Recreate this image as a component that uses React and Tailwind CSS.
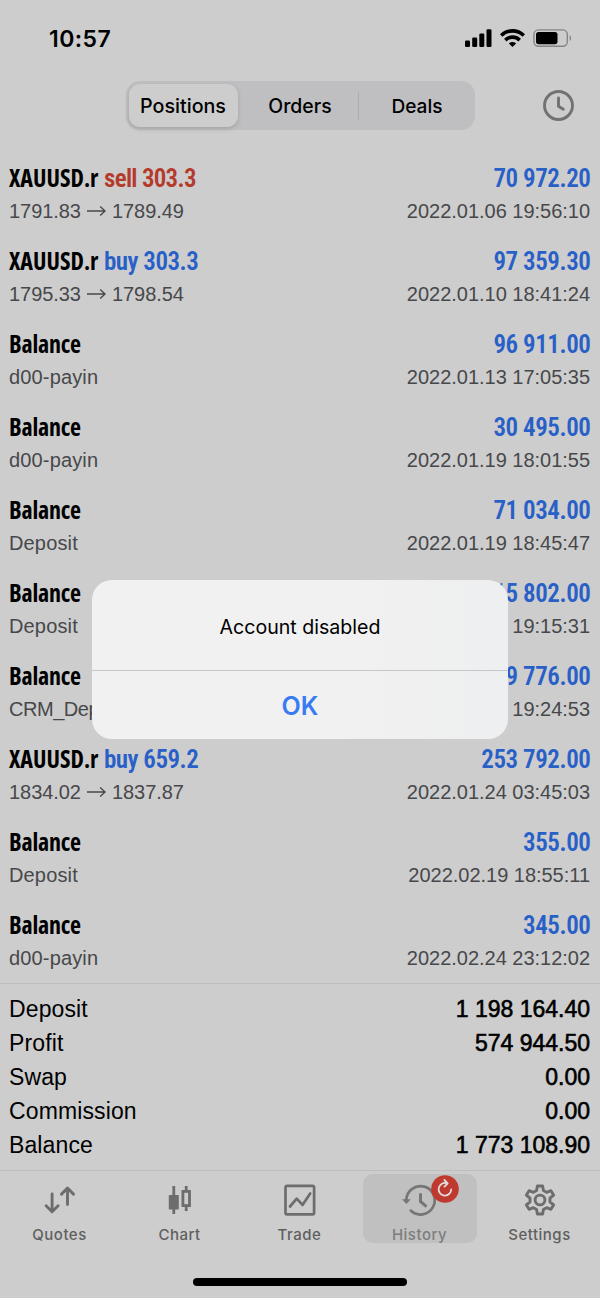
const deals = [
  { side: "sell", name: "XAUUSD.r", volume: "303.3", amount: "70 972.20", from: "1791.83", to: "1789.49", time: "2022.01.06 19:56:10" },
  { side: "buy", name: "XAUUSD.r", volume: "303.3", amount: "97 359.30", from: "1795.33", to: "1798.54", time: "2022.01.10 18:41:24" },
  { name: "Balance", note: "d00-payin", amount: "96 911.00", time: "2022.01.13 17:05:35" },
  { name: "Balance", note: "d00-payin", amount: "30 495.00", time: "2022.01.19 18:01:55" },
  { name: "Balance", note: "Deposit", amount: "71 034.00", time: "2022.01.19 18:45:47" },
  { name: "Balance", note: "Deposit", amount: "15 802.00", time: "2022.01.19 19:15:31" },
  { name: "Balance", note: "CRM_Deposit", amount: "9 776.00", time: "2022.01.19 19:24:53" },
  { side: "buy", name: "XAUUSD.r", volume: "659.2", amount: "253 792.00", from: "1834.02", to: "1837.87", time: "2022.01.24 03:45:03" },
  { name: "Balance", note: "Deposit", amount: "355.00", time: "2022.02.19 18:55:11" },
  { name: "Balance", note: "d00-payin", amount: "345.00", time: "2022.02.24 23:12:02" },
];

const totals = [
  ["Deposit", "1 198 164.40"],
  ["Profit", "574 944.50"],
  ["Swap", "0.00"],
  ["Commission", "0.00"],
  ["Balance", "1 773 108.90"],
];

function StatusBar() {
  return (
    <div className="flex h-[76px] items-center justify-between pl-[49px] pr-7 font-['Inter',sans-serif]">
      <span className="pt-[2px] text-[23px] font-semibold tracking-[0.45px]">10:57</span>
      <div className="flex items-center">
        <svg width="27" height="18" viewBox="0 0 27 18" className="mr-2">
          <rect x="0" y="11.5" width="5" height="6.5" rx="1.3" />
          <rect x="7.2" y="8.5" width="5" height="9.5" rx="1.3" />
          <rect x="14.3" y="4.5" width="5" height="13.5" rx="1.3" />
          <rect x="21.5" y="0.3" width="5" height="17.7" rx="1.3" />
        </svg>
        <svg width="25" height="18" viewBox="0 0 25 18" className="mr-2" fill="none" stroke="#000" strokeWidth="3.6">
          <path d="M1.2 6.5a16 16 0 0 1 22.6 0" />
          <path d="M5.3 11.1a10.3 10.3 0 0 1 14.4 0" />
          <path d="M12.5 18 8.9 14.4a5.2 5.2 0 0 1 7.2 0Z" fill="#000" stroke="none" />
        </svg>
        <svg width="39" height="18" viewBox="0 0 39 18">
          <rect x="0.9" y="0.9" width="33.4" height="16.4" rx="4.5" fill="none" stroke="#858585" strokeWidth="1.4" />
          <rect x="3" y="3" width="21.5" height="12.2" rx="2.6" />
          <path d="M36.6 6.3c2 .8 2 4.8 0 5.6Z" fill="#858585" />
        </svg>
      </div>
    </div>
  );
}

function Header() {
  return (
    <div className="flex h-[77px] items-start pl-[126px] pt-[5px]">
      <div className="flex h-[49px] w-[349px] items-center rounded-[14px] bg-[#bfbfc2] px-[3px] text-center font-['Inter',sans-serif] font-medium">
        <div className="h-[43px] w-[109px] rounded-[11px] bg-[#cdcdcd] pr-px text-[19.7px] leading-[45px] shadow-[0_2px_5px_rgba(0,0,0,0.14)]">Positions</div>
        <div className="w-[121px] border-r border-[#acacaf] pl-[4px] text-[19.4px] leading-[28px]">Orders</div>
        <div className="flex-1 pl-[3px] text-[19.1px] leading-[28px]">Deals</div>
      </div>
      <svg width="32" height="32" viewBox="0 0 32 32" className="ml-[67px] mt-2" fill="none" stroke="#727272" strokeWidth="2.9" strokeLinecap="round" strokeLinejoin="round">
        <circle cx="16.5" cy="16.5" r="14" />
        <path d="M16.5 9v8.2l4.8 3" />
      </svg>
    </div>
  );
}

function Arrow() {
  return (
    <svg width="19" height="12" viewBox="0 0 19 12" className="mx-[6px]" fill="none" stroke="#47484b" strokeWidth="1.4">
      <path d="M0 6h18M13.2 1.4 18.1 6l-4.9 4.6" />
    </svg>
  );
}

function DealRow({ deal }) {
  return (
    <div className="h-[83px] pl-[9px] pr-[10px] pt-[5px]">
      <div className="flex h-10 items-center justify-between text-[25px] [font-stretch:75%]">
        <div className="flex items-center">
          <span className={deal.side ? "w-[95px] font-['Open_Sans',sans-serif] text-2xl font-bold" : "font-['Open_Sans',sans-serif] text-2xl font-bold tracking-[-0.2px]"}>{deal.name}</span>
          {deal.side && (
            <span className={deal.side === "sell" ? "pt-[2px] font-['Roboto',sans-serif] font-semibold tracking-[-0.7px] text-[#b43a2c]" : "pt-[2px] font-['Roboto',sans-serif] font-semibold tracking-[-0.5px] text-[#2860c8]"}>
              {deal.side} {deal.volume}
            </span>
          )}
        </div>
        <span className="mr-[-0.5px] pt-[2px] font-['Roboto',sans-serif] font-semibold tracking-[-0.42px] text-[#2860c8]">{deal.amount}</span>
      </div>
      <div className="flex h-[26px] items-center justify-between text-xl text-[#47484b]">
        {deal.side ? (
          <div className="flex items-center tracking-[-0.05px]">{deal.from}<Arrow />{deal.to}</div>
        ) : (
          <span className={deal.note === "CRM_Deposit" ? "tracking-[-0.45px]" : "tracking-[0.15px]"}>{deal.note}</span>
        )}
        <span className="tracking-[-0.02px]">{deal.time}</span>
      </div>
    </div>
  );
}

function QuotesIcon() {
  return (
    <svg width="32" height="32" viewBox="0 0 32 32" fill="none" stroke="#6d6d6d" strokeWidth="2.9" strokeLinecap="round" strokeLinejoin="round">
      <path d="M8.1 10v17.6M2.1 21.7l6 6 6-6M23.5 20.5V4.1M17.5 10.1l6-6 6 6" />
    </svg>
  );
}

function ChartIcon() {
  return (
    <svg width="32" height="32" viewBox="0 0 32 32" fill="none" stroke="#6d6d6d" strokeWidth="2.8">
      <rect x="4.8" y="11" width="10" height="14.6" rx="0.8" fill="#6d6d6d" stroke="none" />
      <path d="M9.8 2v28M22.2 2v5M22.2 22v5" />
      <rect x="18.9" y="7.4" width="6.6" height="14.2" />
    </svg>
  );
}

function TradeIcon() {
  return (
    <svg width="32" height="32" viewBox="0 0 32 32" fill="none" stroke="#6d6d6d" strokeWidth="2.7" strokeLinejoin="round">
      <rect x="1.5" y="1.8" width="28.6" height="28.6" rx="1.6" />
      <path d="M6 22.5l6.7-7.8 5.8 6.2 7.7-11.4" strokeLinecap="round" />
    </svg>
  );
}

function HistoryIcon() {
  return (
    <svg width="36" height="32" viewBox="0 0 36 32" fill="none" stroke="#767676" strokeWidth="2.7" strokeLinecap="round">
      <path d="M4.3 15.8A14.2 14.2 0 1 1 8.7 26.6" />
      <path d="M0 15.2h8.8l-4.4 4.8Z" fill="#767676" stroke="none" />
      <path d="M18.5 9.3v8.2l6 5.2" strokeWidth="3" strokeLinecap="butt" />
    </svg>
  );
}

function SettingsIcon() {
  return (
    <svg width="32" height="32" viewBox="0 0 32 32" fill="none" stroke="#6d6d6d" strokeWidth="2.9" strokeLinejoin="round">
      <path d="M13.4 2h5.2l.8 4.5 3.2 1.8 4.3-1.6 2.7 4.4-3.6 3v3.8l3.6 3-2.7 4.4-4.3-1.6-3.2 1.8-.8 4.5h-5.2l-.8-4.5-3.2-1.8-4.3 1.6-2.7-4.4 3.6-3v-3.8l-3.6-3 2.7-4.4 4.3 1.6 3.2-1.8Z" />
      <circle cx="16" cy="16" r="4.9" />
    </svg>
  );
}

function Tab({ icon, label, active }) {
  return (
    <div className="flex h-full w-[120px] justify-center pr-px">
      <div className={active ? "relative mt-[3px] flex h-[69px] w-[114px] flex-col items-center rounded-[10px] bg-[#c0c0c0] pt-[10px] text-[#7d7d7d]" : "mt-[3px] flex h-[69px] w-[114px] flex-col items-center pt-[10px] text-[#5f5f5f]"}>
        <div className="pl-px">{icon}</div>
        <span className="mt-2 text-[15px] leading-[22px] font-medium tracking-[0.5px]">{label}</span>
        {active && (
          <svg width="28" height="28" viewBox="0 0 28 28" className="absolute left-[68px] top-px" fill="none" stroke="#dedede" strokeWidth="1.8" strokeLinecap="round" strokeLinejoin="round">
            <circle cx="14" cy="14" r="13.8" fill="#c0392e" stroke="none" />
            <path d="M15.6 8.2a6.3 6.3 0 1 0 4.6 6.2M13.4 5l3.3 3.3-3.2 3.3" />
          </svg>
        )}
      </div>
    </div>
  );
}

export default function App() {
  return (
    <div className="relative flex h-[1298px] w-[600px] flex-col overflow-hidden bg-[#cdcdcd] font-['Liberation_Sans',Arial,sans-serif] text-black">
      <StatusBar />
      <Header />
      <div>
        {deals.map((deal) => <DealRow key={deal.time} deal={deal} />)}
      </div>
      <div className="h-[187px] border-t-[1.5px] border-[#bebebe] pl-[9px] pr-[10px] pt-2">
        {totals.map(([label, value]) => (
          <div key={label} className="flex h-[34px] items-center justify-between text-[23px]">
            <span className="tracking-[0.12px]">{label}</span>
            <span className="[-webkit-text-stroke:0.6px_#000]">{value}</span>
          </div>
        ))}
      </div>
      <div className="flex h-[80px] border-t border-[#bebebe] font-['Inter',sans-serif]">
        <Tab icon={<QuotesIcon />} label="Quotes" />
        <Tab icon={<ChartIcon />} label="Chart" />
        <Tab icon={<TradeIcon />} label="Trade" />
        <Tab icon={<HistoryIcon />} label="History" active />
        <Tab icon={<SettingsIcon />} label="Settings" />
      </div>
      <div className="mx-auto mt-7 h-2 w-[214px] rounded-full bg-black" />

      <div className="absolute left-[92px] top-[580px] h-[159px] w-[416px] rounded-[20px] bg-linear-to-r from-[#f1f1f1] from-60% to-[#eeeff0] text-center font-['Inter',sans-serif]">
        <div className="h-[91px] border-b border-[#c6c8ca] text-[19.6px] leading-[94px]">Account disabled</div>
        <div className="text-[25px] leading-[70px] font-semibold text-[#387bf2]">OK</div>
      </div>
    </div>
  );
}
